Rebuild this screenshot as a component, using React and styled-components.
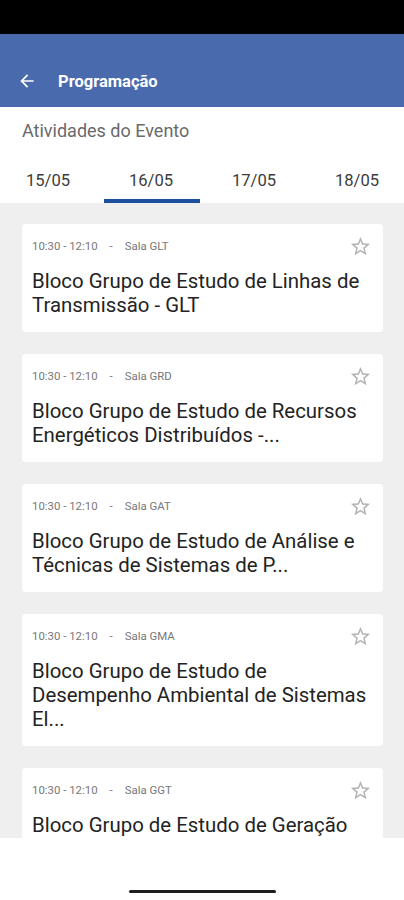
import styled, { createGlobalStyle } from "styled-components";
import { MdStarBorder, MdArrowBack } from "react-icons/md";

const GlobalStyle = createGlobalStyle`
  html, body {
    margin: 0;
    padding: 0;
    background: #ffffff;
  }
  body {
    font-family: Roboto, "Liberation Sans", sans-serif;
  }
`;

const Screen = styled.div`
  width: 404px;
  height: 900px;
  display: flex;
  flex-direction: column;
  overflow: hidden;
  background: #ffffff;
`;

const StatusBar = styled.div`
  height: 34px;
  flex-shrink: 0;
  background: #000000;
`;

const AppBar = styled.header`
  height: 73px;
  flex-shrink: 0;
  box-sizing: border-box;
  padding: 21px 0 0 17px;
  display: flex;
  align-items: center;
  gap: 21px;
  background: #4a6aae;
  color: #ffffff;

  h1 {
    margin: 0;
    font-size: 16.5px;
    font-weight: 700;
  }
`;

const BackButton = styled.span`
  display: flex;
  align-items: center;
`;

const Heading = styled.div`
  flex-shrink: 0;
  background: #ffffff;
  padding: 13px 0 0 22px;
  height: 22px;
  font-size: 18px;
  color: #6a6a6a;
  line-height: 22px;
`;

const Tabs = styled.nav`
  flex-shrink: 0;
  display: flex;
  gap: 7px;
  height: 54px;
  margin-top: 7px;
  overflow: hidden;
  background: #ffffff;
`;

const Tab = styled.div`
  flex: 0 0 96px;
  position: relative;
  display: flex;
  justify-content: center;
  padding-top: 22px;
  box-sizing: border-box;
  font-size: 16.6px;
  line-height: 20px;
  color: #3c3c3c;

  &::after {
    content: "";
    display: ${(p) => (p.$active ? "block" : "none")};
    position: absolute;
    left: 1px;
    right: -1px;
    bottom: 0;
    height: 4px;
    background: #1e4e9e;
  }
`;

const List = styled.main`
  flex: 1;
  min-height: 0;
  overflow: hidden;
  background: #efefef;
  padding: 21px 21px 0 22px;
  display: flex;
  flex-direction: column;
  gap: 22px;
`;

const Card = styled.article`
  flex-shrink: 0;
  background: #ffffff;
  border-radius: 4px;
  padding: 14px 12px 15px 10px;
`;

const Meta = styled.div`
  height: 16px;
  display: flex;
  align-items: center;
  justify-content: space-between;
  font-size: 11.4px;
  color: #777777;
`;

const MetaText = styled.span`
  display: flex;
  gap: 12px;
`;

const StarIcon = styled(MdStarBorder)`
  color: #b4b4b4;
  margin-right: -1px;
`;

const Title = styled.h2`
  margin: 15px 0 0;
  font-size: 20.4px;
  font-weight: 400;
  line-height: 24px;
  color: #232323;
`;

const NavArea = styled.div`
  height: 62px;
  flex-shrink: 0;
  background: #ffffff;
  display: flex;
  justify-content: center;
  padding-top: 52px;
  box-sizing: border-box;
`;

const HomeBar = styled.div`
  width: 147px;
  height: 3px;
  border-radius: 2px;
  background: #1e1e1e;
`;

const days = ["15/05", "16/05", "17/05", "18/05"];

const activities = [
  { room: "Sala GLT", title: "Bloco Grupo de Estudo de Linhas de Transmissão - GLT" },
  { room: "Sala GRD", title: "Bloco Grupo de Estudo de Recursos Energéticos Distribuídos -..." },
  { room: "Sala GAT", title: "Bloco Grupo de Estudo de Análise e Técnicas de Sistemas de P..." },
  { room: "Sala GMA", title: "Bloco Grupo de Estudo de Desempenho Ambiental de Sistemas El..." },
  { room: "Sala GGT", title: "Bloco Grupo de Estudo de Geração" },
];

const App = () => {
  return (
    <Screen>
      <GlobalStyle />
      <StatusBar />
      <AppBar>
        <BackButton>
          <MdArrowBack size={20} />
        </BackButton>
        <h1>Programação</h1>
      </AppBar>
      <Heading>Atividades do Evento</Heading>
      <Tabs>
        {days.map((d) => (
          <Tab key={d} $active={d === "16/05"}>
            {d}
          </Tab>
        ))}
      </Tabs>
      <List>
        {activities.map((a) => (
          <Card key={a.room}>
            <Meta>
              <MetaText>
                <span>10:30 - 12:10</span>
                <span>-</span>
                <span>{a.room}</span>
              </MetaText>
              <StarIcon size={23} />
            </Meta>
            <Title>{a.title}</Title>
          </Card>
        ))}
      </List>
      <NavArea>
        <HomeBar />
      </NavArea>
    </Screen>
  );
};

export default App;
